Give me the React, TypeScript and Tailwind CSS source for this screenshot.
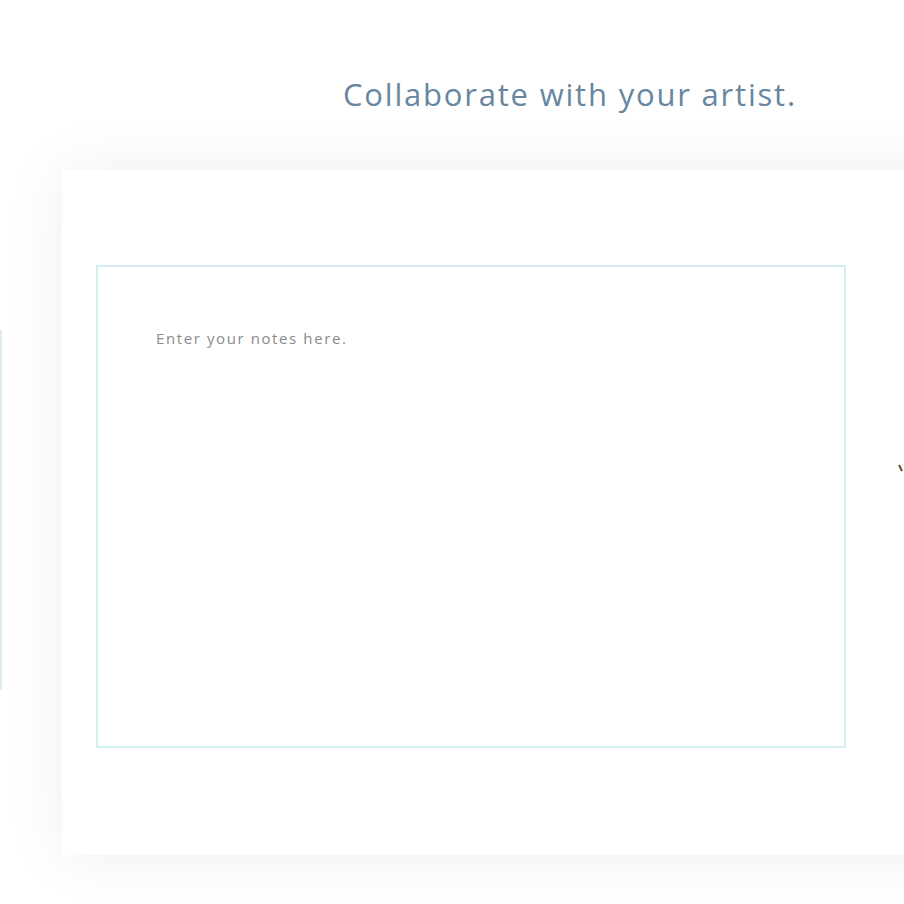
import React from "react";

export default function App() {
  return (
    <div className="w-[904px] h-[904px] overflow-hidden bg-white relative" style={{ fontFamily: '"Open Sans", "Noto Sans", sans-serif' }}>
      <div className="h-[170px] pl-[343px] pt-[74px]">
        <h1 className="text-[31px] leading-[40px] text-[#6786a0] font-medium whitespace-nowrap tracking-[1.8px]">
          Collaborate with your artist.
        </h1>
      </div>
      <div className="flex items-start">
        <div className="w-[2px] h-[360px] mt-[160px] bg-[#dcecf2] shrink-0" />
        <div className="relative ml-[60px] w-[900px] h-[685px] shrink-0 bg-white shadow-[0_0_60px_rgba(0,0,0,0.07)] pt-[95px] pl-[34px]">
          <div className="w-[750px] h-[483px] border-2 border-[#d4edf2] pl-[58px] pt-[61px]">
            <p className="text-[15px] leading-[20px] text-[#8a8a8a] tracking-[1.6px]">Enter your notes here.</p>
          </div>
          <svg className="absolute left-[836px] top-[293px]" width="8" height="10" viewBox="0 0 8 10">
            <path d="M1 2 L4 8" stroke="#6b4a2a" strokeWidth="2" fill="none" />
          </svg>
        </div>
      </div>
    </div>
  );
}
